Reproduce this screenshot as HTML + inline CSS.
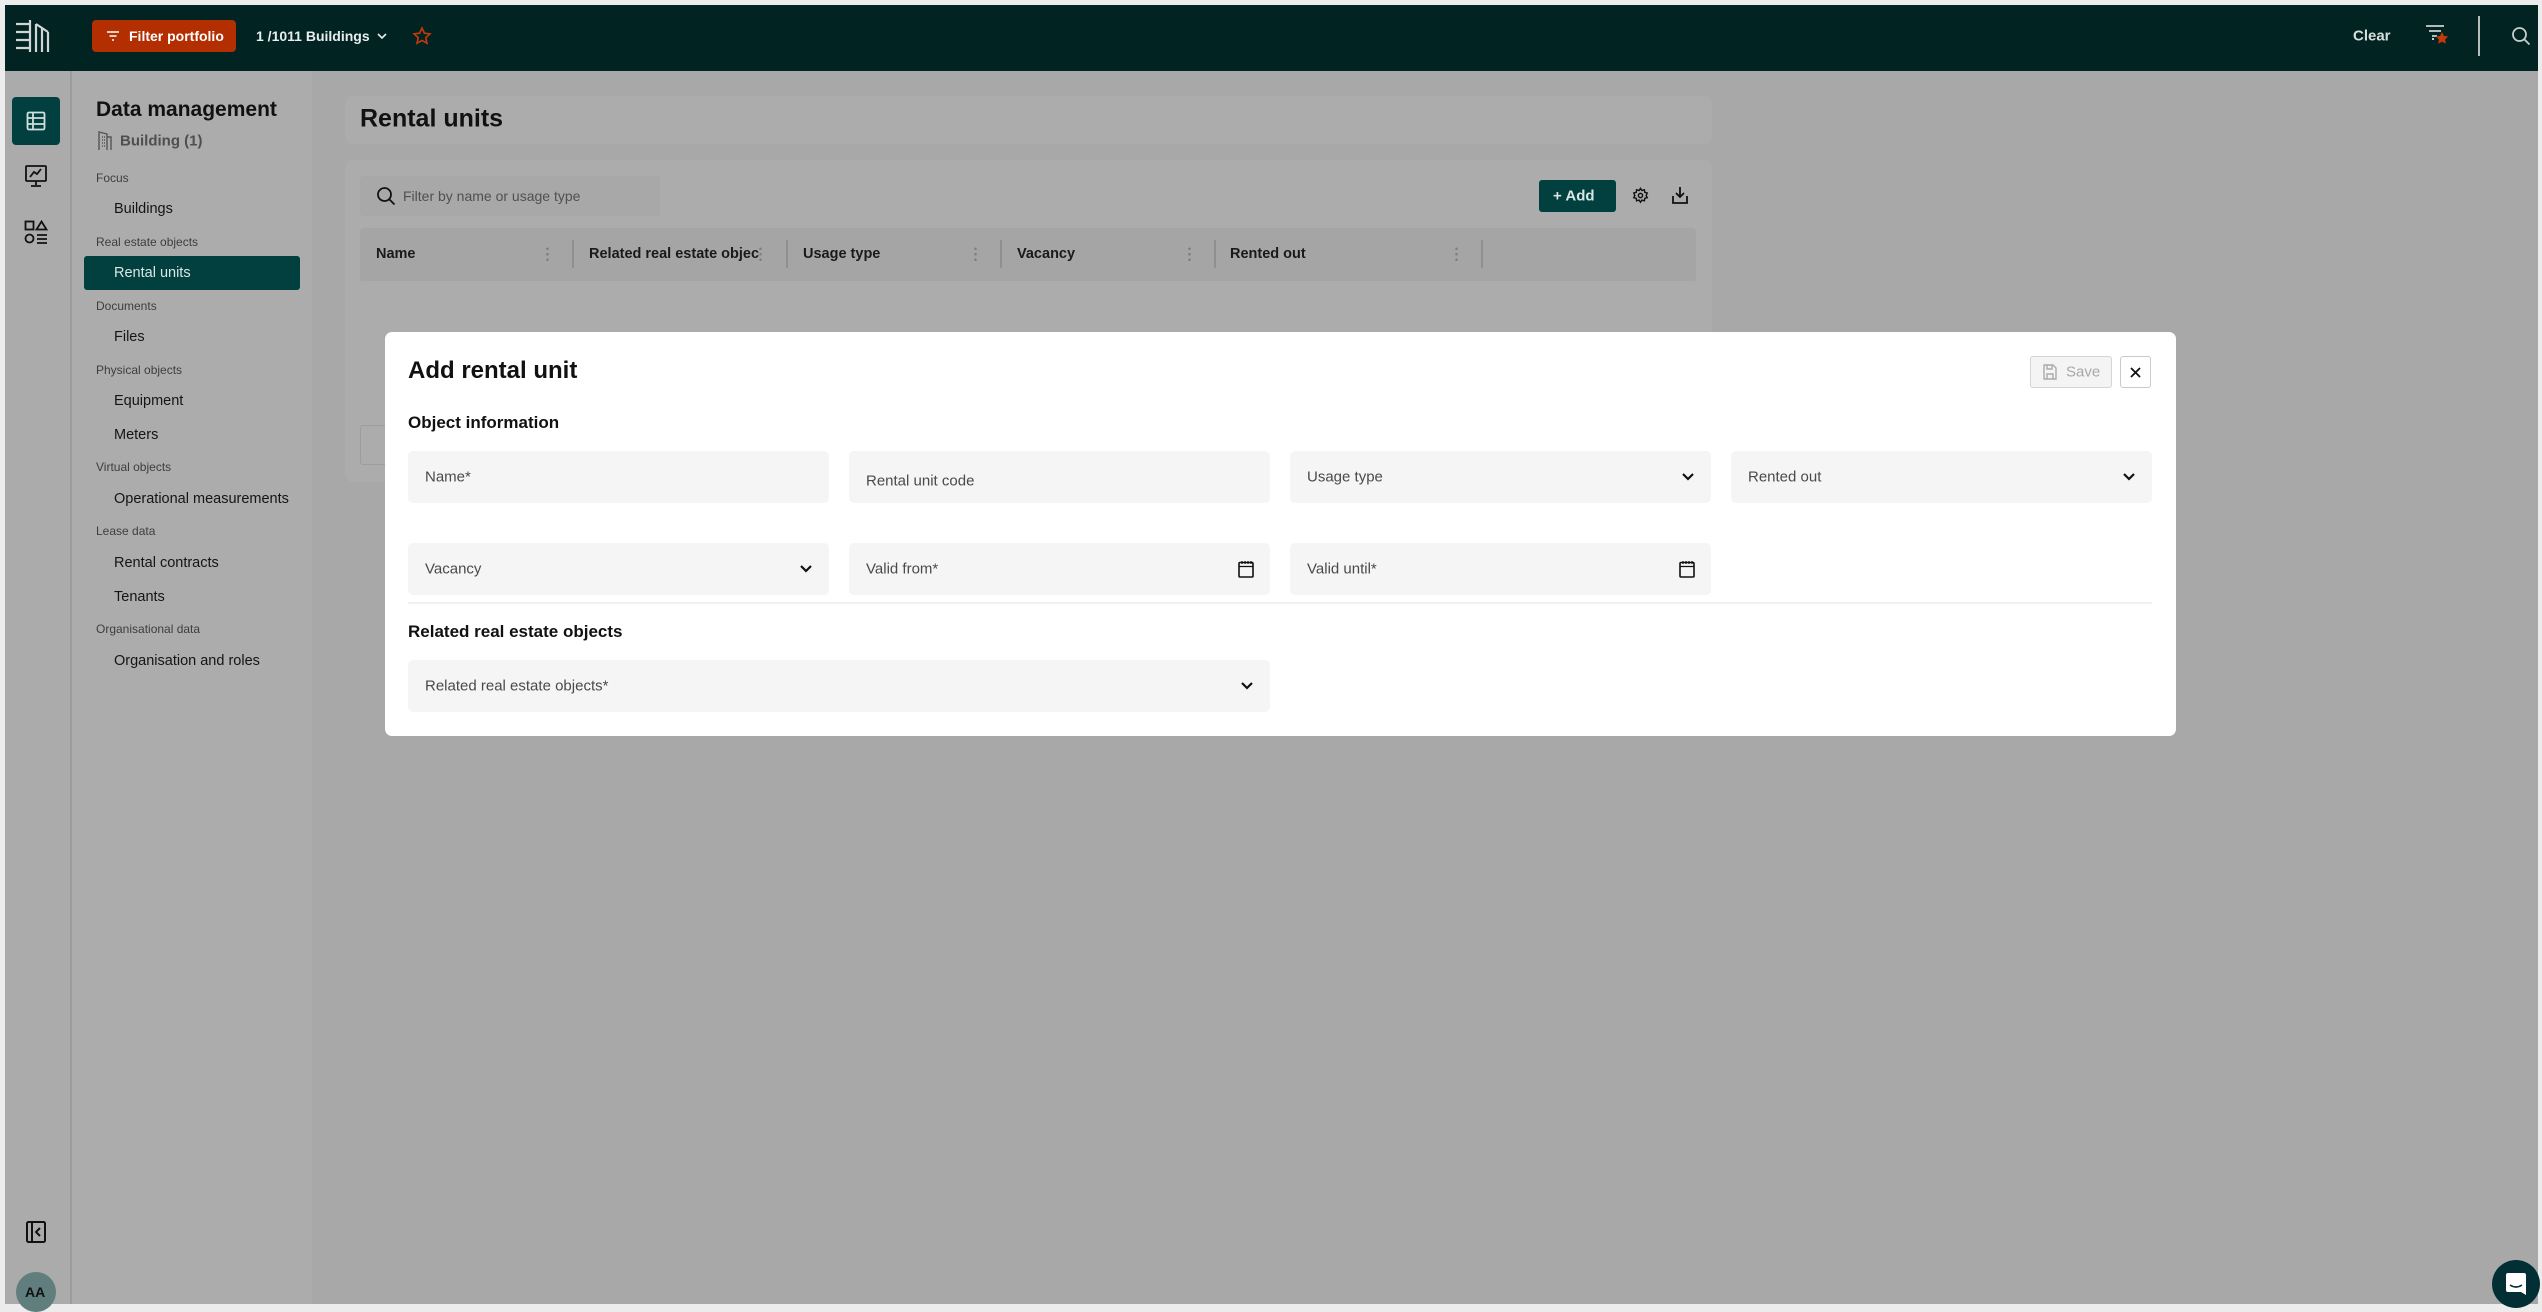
<!DOCTYPE html>
<html><head><meta charset="utf-8"><style>
*{box-sizing:border-box;margin:0;padding:0}
body{width:2542px;height:1308px;background:#ececec;font-family:"Liberation Sans",sans-serif;position:relative;overflow:hidden;color:#111}
.a{position:absolute}
.top{left:5px;top:5px;width:2533px;height:66px;background:#012322}
.rail{left:5px;top:71px;width:67px;height:1233px;background:#aaabaa;border-right:2px solid #9a9d9c}
.side{left:72px;top:71px;width:240px;height:1233px;background:#acacac}
.main{left:312px;top:71px;width:2226px;height:1233px;background:#a7a8a7}
.sec{font-size:12px;color:#3e3e3e;left:96px}
.it{font-size:14.5px;color:#151515;left:114px}
.t{transform:translateY(-50%);white-space:nowrap}
.field{background:#f4f5f4;border-radius:5px;height:52px;width:421px}
.field span{position:absolute;left:17px;top:50%;transform:translateY(-50%);font-size:15px;color:#4a4a4a}
.field svg{position:absolute;right:16px;top:50%;transform:translateY(-50%)}
.th{font-size:14.5px;font-weight:bold;color:#1a1a1a;top:254px;transform:translateY(-50%);white-space:nowrap}
.sep{top:240px;width:2px;height:28px;background:#8f9190}
.dots{top:246px;width:3px;height:16px;background:radial-gradient(circle,#7a7c7b 1px,transparent 1.5px) 0 0/3px 5.5px}
</style></head><body>
<div class="a top"></div>
<svg class="a" style="left:14px;top:18px" width="40" height="36" viewBox="0 0 40 36" fill="none" stroke="#cfd6d5" stroke-width="2.2"><path d="M2 6h14M2 14h14M2 22h14M2 30h14M16 2v32M22 6v28M28 10v24M34 14v20M22 6l12 8"/></svg>
<div class="a" style="left:92px;top:20px;width:144px;height:32px;background:#b32e00;border-radius:4px"></div>
<svg class="a" style="left:106px;top:29px" width="14" height="14" viewBox="0 0 14 14" stroke="#fff" stroke-width="1.6"><path d="M1 3h12M3.5 7h7M6 11h2"/></svg>
<div class="a t" style="left:129px;top:36px;font-size:14px;font-weight:bold;color:#fff">Filter portfolio</div>
<div class="a t" style="left:256px;top:36px;font-size:14px;font-weight:bold;color:#e8eeee">1 /1011 Buildings</div>
<svg class="a" style="left:376px;top:31px" width="12" height="10" viewBox="0 0 12 10" fill="none" stroke="#e8eeee" stroke-width="1.6"><path d="M2 3l4 4 4-4"/></svg>
<svg class="a" style="left:412px;top:26px" width="20" height="20" viewBox="0 0 24 24" fill="none" stroke="#c4380b" stroke-width="2"><path d="M12 2.5l2.9 6.1 6.6.8-4.9 4.6 1.3 6.6L12 17.3 6.1 20.6l1.3-6.6L2.5 9.4l6.6-.8z"/></svg>
<div class="a t" style="left:2353px;top:36px;font-size:15px;font-weight:bold;color:#d8dedd">Clear</div>
<svg class="a" style="left:2425px;top:22px" width="30" height="24" viewBox="0 0 30 24" fill="none"><path d="M1 4h18M4 9h12M7 14h5" stroke="#c9cfce" stroke-width="1.8"/><path d="M7 17h2" stroke="#c9cfce" stroke-width="2"/><path d="M17 10l1.9 3.9 4.3.6-3.1 3 .7 4.3-3.8-2-3.8 2 .7-4.3-3.1-3 4.3-.6z" fill="#c4380b"/></svg>
<div class="a" style="left:2478px;top:16px;width:2px;height:40px;background:#b5bcbb"></div>
<svg class="a" style="left:2511px;top:26px" width="20" height="20" viewBox="0 0 20 20" fill="none" stroke="#c9cfce" stroke-width="1.8"><circle cx="8.5" cy="8.5" r="6.5"/><path d="M13.5 13.5l5 5"/></svg>

<div class="a rail"></div>
<div class="a" style="left:12px;top:97px;width:48px;height:48px;background:#01403f;border-radius:4px"></div>
<svg class="a" style="left:26px;top:111px" width="20" height="20" viewBox="0 0 20 20" fill="none" stroke="#cfe0de" stroke-width="1.8"><rect x="1.5" y="1.5" width="17" height="17" rx="1.5"/><path d="M1.5 7h17M1.5 13h17M7 1.5v17"/></svg>
<svg class="a" style="left:24px;top:164px" width="24" height="24" viewBox="0 0 24 24" fill="none" stroke="#111" stroke-width="1.8"><rect x="2" y="2" width="20" height="15" rx="1"/><path d="M6 13l4-5 3 2 4-5M12 17v4M7 22h10"/></svg>
<svg class="a" style="left:24px;top:220px" width="24" height="26" viewBox="0 0 24 26" fill="none" stroke="#111" stroke-width="1.8"><rect x="1.5" y="1.5" width="8" height="8"/><path d="M17.5 1.5l5 8h-10z"/><circle cx="5.5" cy="18.5" r="4"/><path d="M13 15h10M13 19h10M13 23h10"/></svg>
<svg class="a" style="left:26px;top:1221px" width="20" height="22" viewBox="0 0 20 22" fill="none" stroke="#111" stroke-width="2"><rect x="1" y="1" width="18" height="20" rx="1.5"/><path d="M6 1v20M14 7l-4 4 4 4"/></svg>
<div class="a" style="left:16px;top:1272px;width:40px;height:40px;border-radius:50%;background:#5f7e7d"></div>
<div class="a t" style="left:25px;top:1292px;font-size:14px;font-weight:bold;color:#111">AA</div>

<div class="a side"></div>
<div class="a t" style="left:96px;top:110px;font-size:21px;font-weight:bold;color:#111">Data management</div>
<svg class="a" style="left:98px;top:131px" width="14" height="20" viewBox="0 0 14 20" fill="none" stroke="#555" stroke-width="1.4"><path d="M1 19V1l8 2v16M9 6h4v13M4 6h1M4 9h1M4 12h1M4 15h1M6 6h1M6 9h1M6 12h1M6 15h1"/></svg>
<div class="a t" style="left:120px;top:141px;font-size:15px;font-weight:bold;color:#4f4f4f">Building (1)</div>
<div class="a t sec" style="top:178px">Focus</div>
<div class="a t it" style="top:209px">Buildings</div>
<div class="a t sec" style="top:242px">Real estate objects</div>
<div class="a" style="left:84px;top:256px;width:216px;height:34px;background:#01403f;border-radius:3px"></div>
<div class="a t it" style="top:273px;color:#d8e6e4">Rental units</div>
<div class="a t sec" style="top:306px">Documents</div>
<div class="a t it" style="top:337px">Files</div>
<div class="a t sec" style="top:370px">Physical objects</div>
<div class="a t it" style="top:401px">Equipment</div>
<div class="a t it" style="top:435px">Meters</div>
<div class="a t sec" style="top:467px">Virtual objects</div>
<div class="a t it" style="top:499px">Operational measurements</div>
<div class="a t sec" style="top:531px">Lease data</div>
<div class="a t it" style="top:563px">Rental contracts</div>
<div class="a t it" style="top:597px">Tenants</div>
<div class="a t sec" style="top:629px">Organisational data</div>
<div class="a t it" style="top:661px">Organisation and roles</div>

<div class="a main"></div>
<div class="a" style="left:345px;top:96px;width:1367px;height:48px;background:#acacac;border-radius:8px"></div>
<div class="a t" style="left:360px;top:119px;font-size:25px;font-weight:bold;color:#111">Rental units</div>
<div class="a" style="left:345px;top:160px;width:1367px;height:322px;background:#acacac;border-radius:8px"></div>
<div class="a" style="left:360px;top:176px;width:300px;height:40px;background:#a7a8a7;border-radius:4px"></div>
<svg class="a" style="left:376px;top:186px" width="20" height="20" viewBox="0 0 20 20" fill="none" stroke="#111" stroke-width="1.8"><circle cx="8.5" cy="8.5" r="6.5"/><path d="M13.5 13.5l5 5"/></svg>
<div class="a t" style="left:403px;top:196px;font-size:14px;color:#505050">Filter by name or usage type</div>
<div class="a" style="left:1539px;top:180px;width:77px;height:32px;background:#01403f;border-radius:3px"></div>
<div class="a t" style="left:1553px;top:196px;font-size:15px;font-weight:bold;color:#d8e6e4">+ Add</div>
<svg class="a" style="left:1632px;top:187px" width="17" height="17" viewBox="0 0 24 24" fill="none" stroke="#111" stroke-width="2"><circle cx="12" cy="12" r="3"/><path d="M12 2l2 3 3.5-1 .5 3.5 3.5 1-1.5 3.5 1.5 3-3.5 1-.5 3.5-3.5-1-2 3-2-3-3.5 1-.5-3.5-3.5-1 1.5-3-1.5-3.5 3.5-1L6.5 4 10 5z"/></svg>
<svg class="a" style="left:1672px;top:186px" width="16" height="18" viewBox="0 0 16 18" fill="none" stroke="#111" stroke-width="1.8"><path d="M8 1v10M4 7l4 4 4-4M1 10v7h14v-7"/></svg>
<div class="a" style="left:360px;top:228px;width:1336px;height:53px;background:#a4a5a4;border-radius:3px"></div>
<div class="a th" style="left:376px">Name</div>
<div class="a th" style="left:589px">Related real estate objec</div>
<div class="a th" style="left:803px">Usage type</div>
<div class="a th" style="left:1017px">Vacancy</div>
<div class="a th" style="left:1230px">Rented out</div>
<div class="a dots" style="left:546px"></div><div class="a dots" style="left:759px"></div><div class="a dots" style="left:974px"></div><div class="a dots" style="left:1188px"></div><div class="a dots" style="left:1455px"></div>
<div class="a sep" style="left:572px"></div><div class="a sep" style="left:786px"></div><div class="a sep" style="left:1000px"></div><div class="a sep" style="left:1214px"></div><div class="a sep" style="left:1481px"></div>
<div class="a" style="left:360px;top:425px;width:40px;height:40px;border:1px solid #9c9d9c;border-radius:3px"></div>

<div class="a" style="left:2492px;top:1260px;width:48px;height:48px;border-radius:50%;background:#012f33"></div>
<svg class="a" style="left:2505px;top:1272px" width="22" height="26" viewBox="0 0 22 26"><path d="M3 1h16a2 2 0 0 1 2 2v20l-5-3H3a2 2 0 0 1-2-2V3a2 2 0 0 1 2-2z" fill="#fff"/><path d="M5 13q6 4 12 0" stroke="#012f33" stroke-width="1.6" fill="none"/></svg>

<div class="a" style="left:385px;top:332px;width:1791px;height:404px;background:#fff;border-radius:7px"></div>
<div class="a t" style="left:408px;top:371px;font-size:24px;font-weight:bold;color:#111">Add rental unit</div>
<div class="a" style="left:2030px;top:356px;width:82px;height:32px;border:1px solid #d4d6d5;background:#f3f4f3;border-radius:3px"></div>
<svg class="a" style="left:2043px;top:364px" width="14" height="16" viewBox="0 0 14 16" fill="none" stroke="#aaa" stroke-width="1.4"><path d="M1 1h9l3 3v11H1zM4 1v4h5V1M4 15v-5h6v5"/></svg>
<div class="a t" style="left:2066px;top:372px;font-size:15px;color:#a8a8a8">Save</div>
<div class="a" style="left:2120px;top:356px;width:31px;height:32px;border:1px solid #c9cbca;border-radius:3px"></div>
<svg class="a" style="left:2130px;top:367px" width="11" height="11" viewBox="0 0 11 11" stroke="#111" stroke-width="1.8"><path d="M1 1l9 9M10 1l-9 9"/></svg>
<div class="a t" style="left:408px;top:423px;font-size:17px;font-weight:bold;color:#111">Object information</div>

<div class="a field" style="left:408px;top:451px"><span>Name*</span></div>
<div class="a field" style="left:849px;top:451px"><span style="top:58%">Rental unit code</span></div>
<div class="a field" style="left:1290px;top:451px"><span>Usage type</span><svg width="14" height="10" viewBox="0 0 14 10" fill="none" stroke="#111" stroke-width="2.2"><path d="M2 2l5 5 5-5"/></svg></div>
<div class="a field" style="left:1731px;top:451px"><span>Rented out</span><svg width="14" height="10" viewBox="0 0 14 10" fill="none" stroke="#111" stroke-width="2.2"><path d="M2 2l5 5 5-5"/></svg></div>

<div class="a field" style="left:408px;top:543px"><span>Vacancy</span><svg width="14" height="10" viewBox="0 0 14 10" fill="none" stroke="#111" stroke-width="2.2"><path d="M2 2l5 5 5-5"/></svg></div>
<div class="a field" style="left:849px;top:543px"><span>Valid from*</span><svg width="16" height="18" viewBox="0 0 16 18" fill="none" stroke="#111" stroke-width="1.6"><rect x="1" y="2.5" width="14" height="14.5" rx="1"/><path d="M1 6.5h14M4 1v3M7 1v3M10 1v3M13 1v3" stroke-width="1.2"/></svg></div>
<div class="a field" style="left:1290px;top:543px"><span>Valid until*</span><svg width="16" height="18" viewBox="0 0 16 18" fill="none" stroke="#111" stroke-width="1.6"><rect x="1" y="2.5" width="14" height="14.5" rx="1"/><path d="M1 6.5h14M4 1v3M7 1v3M10 1v3M13 1v3" stroke-width="1.2"/></svg></div>
<div class="a" style="left:408px;top:602px;width:1744px;height:2px;background:#eff0ef"></div>
<div class="a t" style="left:408px;top:632px;font-size:17px;font-weight:bold;color:#111">Related real estate objects</div>
<div class="a field" style="left:408px;top:660px;width:862px"><span>Related real estate objects*</span><svg width="14" height="10" viewBox="0 0 14 10" fill="none" stroke="#111" stroke-width="2.2"><path d="M2 2l5 5 5-5"/></svg></div>
</body></html>
